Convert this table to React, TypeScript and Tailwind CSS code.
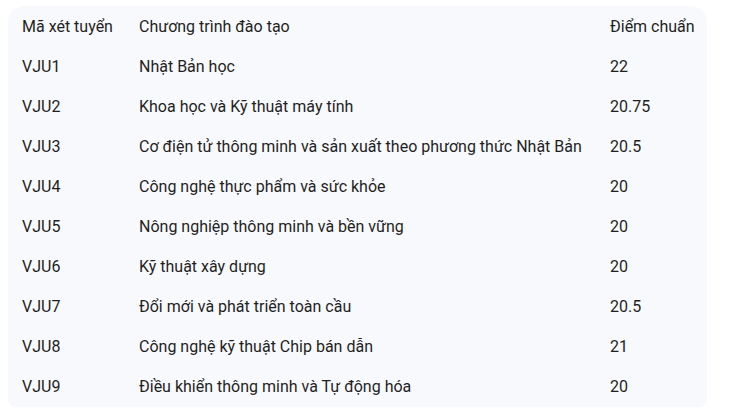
const rows = [
  { code: 'VJU1', name: 'Nhật Bản học', score: '22' },
  { code: 'VJU2', name: 'Khoa học và Kỹ thuật máy tính', score: '20.75' },
  { code: 'VJU3', name: 'Cơ điện tử thông minh và sản xuất theo phương thức Nhật Bản', score: '20.5' },
  { code: 'VJU4', name: 'Công nghệ thực phẩm và sức khỏe', score: '20' },
  { code: 'VJU5', name: 'Nông nghiệp thông minh và bền vững', score: '20' },
  { code: 'VJU6', name: 'Kỹ thuật xây dựng', score: '20' },
  { code: 'VJU7', name: 'Đổi mới và phát triển toàn cầu', score: '20.5' },
  { code: 'VJU8', name: 'Công nghệ kỹ thuật Chip bán dẫn', score: '21' },
  { code: 'VJU9', name: 'Điều khiển thông minh và Tự động hóa', score: '20' },
]

export default function App() {
  return (
    <div className="w-[730px] h-[410px] bg-white pt-[6px] pl-2 font-['Roboto',sans-serif] text-[16px] text-[#1f1f1f]">
      <div className="w-[699px] pt-px rounded-t-2xl rounded-b-lg bg-[#f8f9fc]">
        <div className="grid grid-cols-[117px_471px_1fr] h-10 items-center pl-[14px]">
          <span>Mã xét tuyển</span>
          <span>Chương trình đào tạo</span>
          <span>Điểm chuẩn</span>
        </div>
        {rows.map((r) => (
          <div key={r.code} className="grid grid-cols-[117px_471px_1fr] h-10 items-center pl-[14px]">
            <span>{r.code}</span>
            <span>{r.name}</span>
            <span>{r.score}</span>
          </div>
        ))}
      </div>
    </div>
  )
}
